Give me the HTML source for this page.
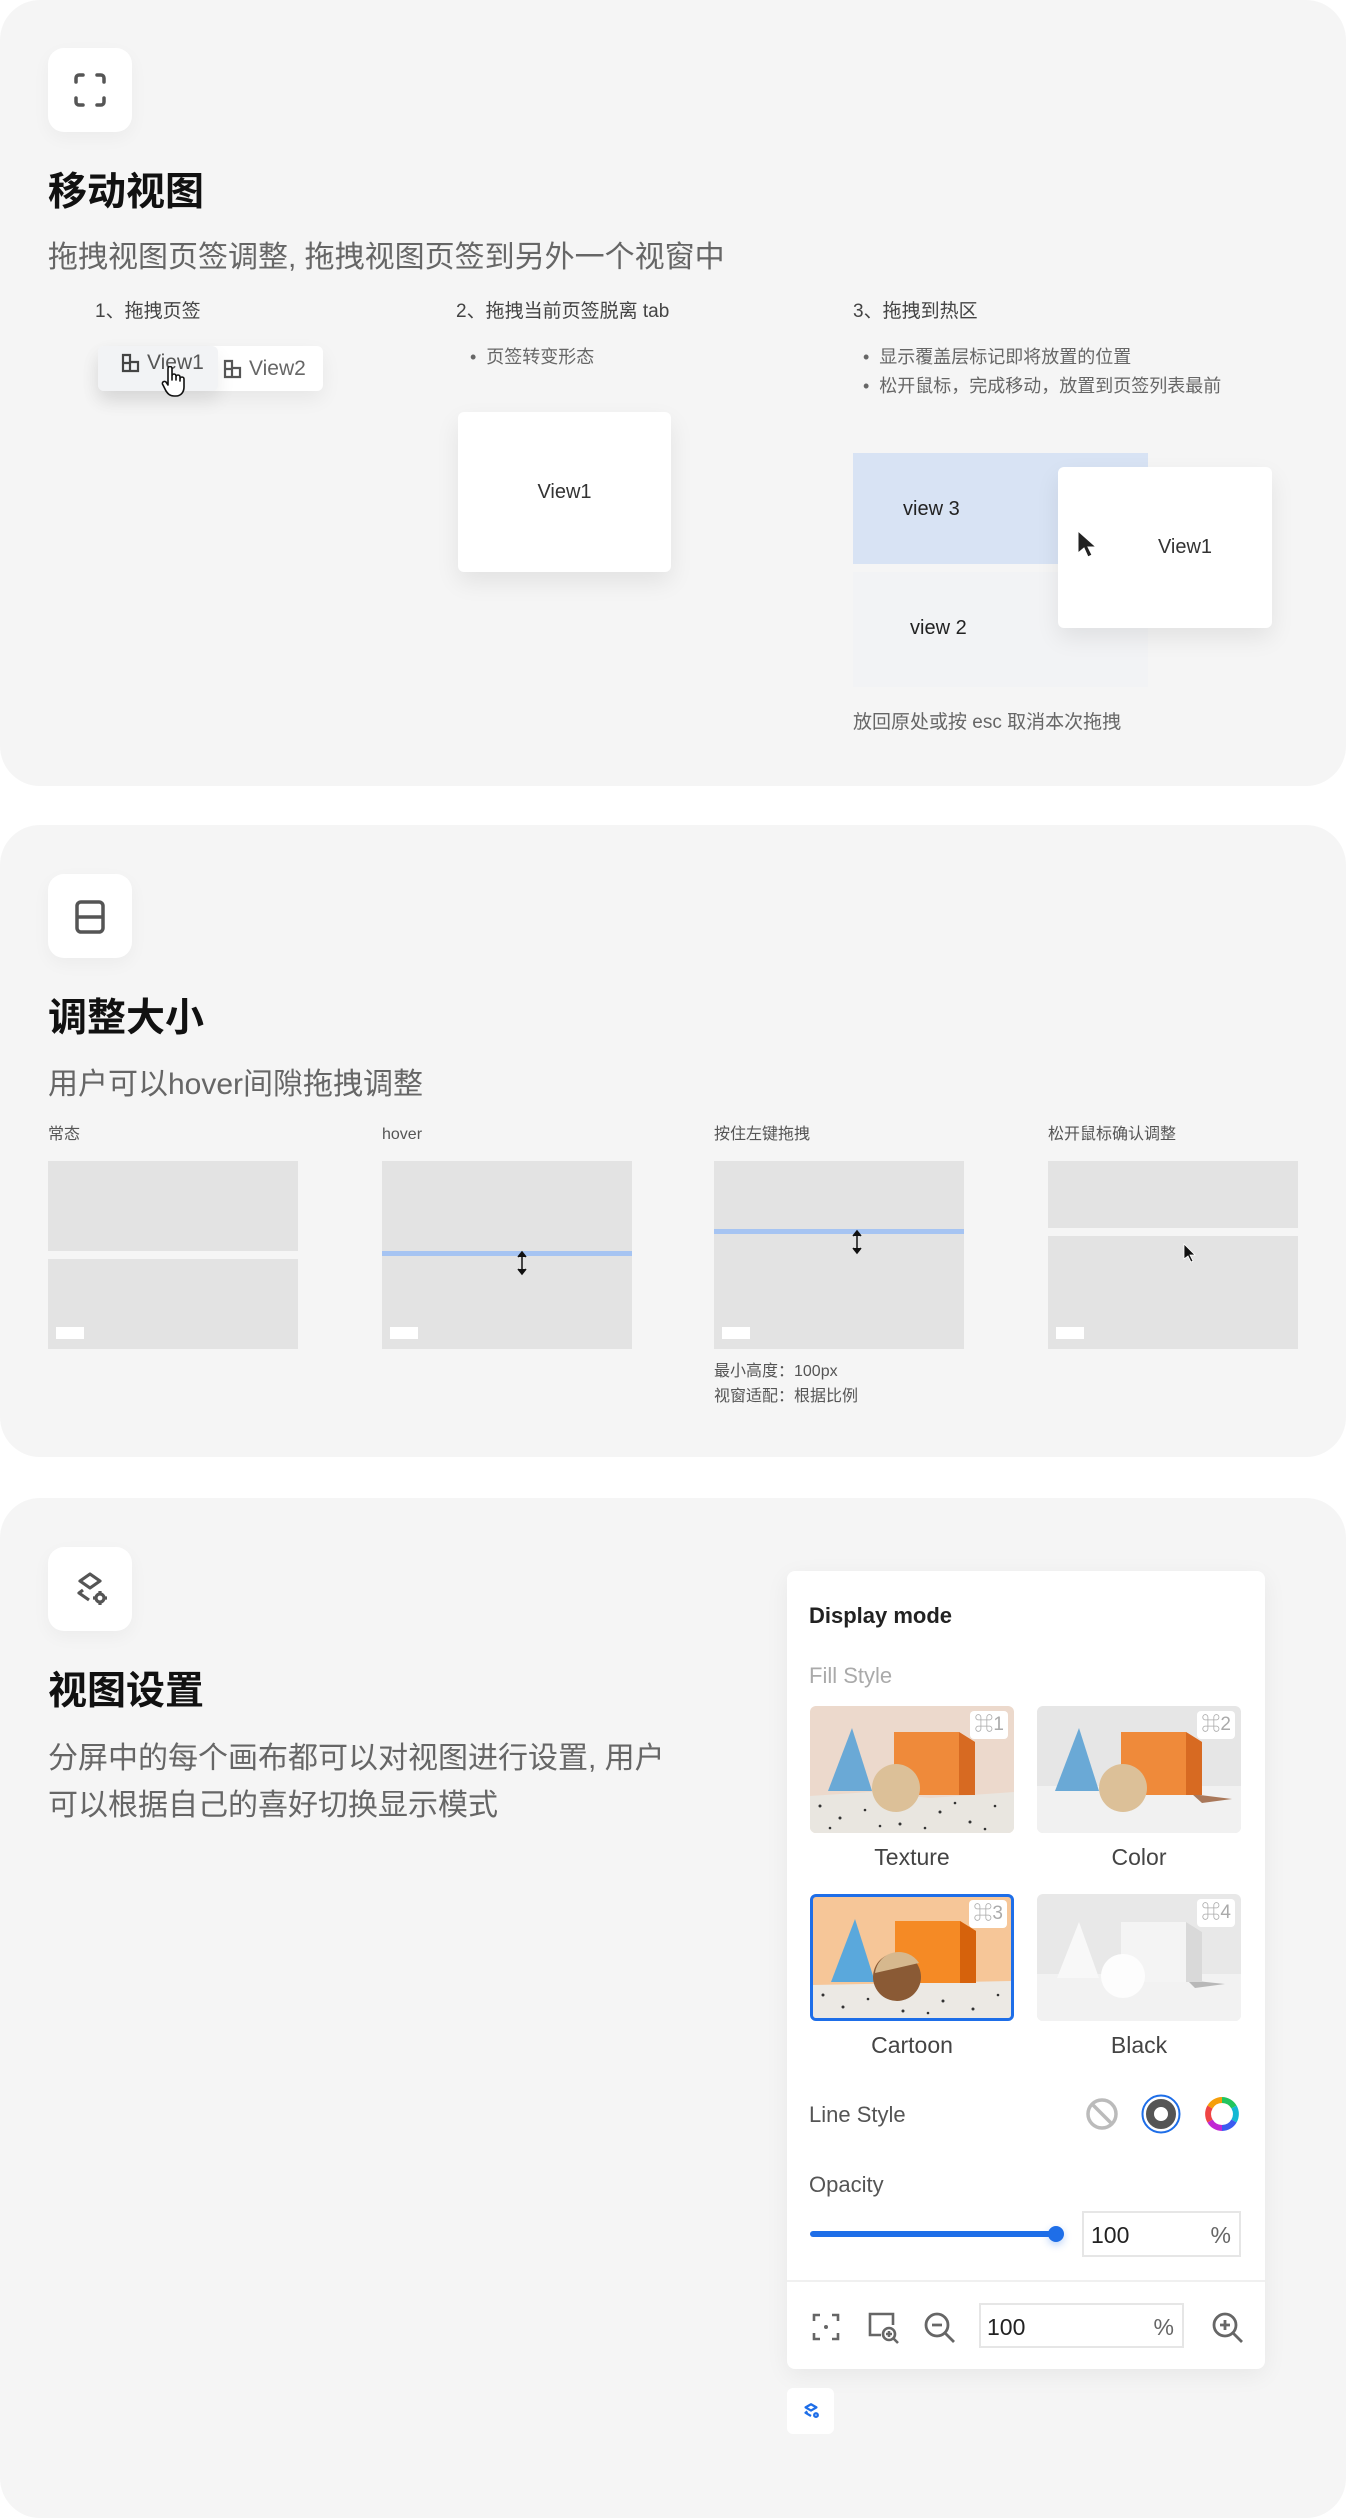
<!DOCTYPE html>
<html><head><meta charset="utf-8"><style>
*{margin:0;padding:0;box-sizing:border-box}
body{width:1346px;height:2482px;background:#fff;position:relative;overflow:hidden;font-family:"Liberation Sans","Noto Sans CJK SC",sans-serif;color:#333}
.a{position:absolute}
.sec{position:absolute;left:0;width:1346px;background:#f5f5f5;border-radius:40px}
.ib{position:absolute;left:48px;width:84px;height:84px;background:#fff;border-radius:16px;box-shadow:0 6px 18px rgba(0,0,0,.04)}
.t{position:absolute;left:48px;font-size:39px;font-weight:bold;color:#111;line-height:1}
.st{position:absolute;left:48px;font-size:30px;color:#666;line-height:47px}
.lb{position:absolute;font-size:19px;color:#444;line-height:1;white-space:nowrap}
.sl{position:absolute;font-size:16px;color:#555;line-height:1;white-space:nowrap}
.pan{position:absolute;background:#e3e3e3}
.wr{position:absolute;width:28px;height:12px;background:#fff}
.card{position:absolute;background:#fff;border-radius:6px;box-shadow:0 10px 24px rgba(0,0,0,.08);display:flex;align-items:center;justify-content:center;font-size:20px;color:#333}
.thumb{position:absolute;width:204px;height:127px;border-radius:6px;overflow:hidden}
.kb{position:absolute;right:6px;top:5px;background:#fff;border-radius:4px;color:#aaa;font-size:19px;padding:1px 4px;line-height:26px}
.cap{position:absolute;width:204px;text-align:center;font-size:23px;color:#444;line-height:1}
.inp{position:absolute;border:2px solid #e6e6e6;background:#fff;font-size:23px;color:#222}
</style></head><body>

<!-- Section 1 -->
<div class="sec" style="top:0;height:786px"></div>
<div class="ib" style="top:48px"><svg width="84" height="84" viewBox="0 0 84 84" fill="none" stroke="#555" stroke-width="3.5" stroke-linecap="round"><path d="M28 34v-4a3 3 0 0 1 3-3h4M49 27h4a3 3 0 0 1 3 3v4M56 50v4a3 3 0 0 1-3 3h-4M35 57h-4a3 3 0 0 1-3-3v-4"/></svg></div>
<div class="t" style="top:173px">移动视图</div>
<div class="st" style="top:234px">拖拽视图页签调整, 拖拽视图页签到另外一个视窗中</div>
<div class="lb" style="left:95px;top:302px">1、拖拽页签</div>
<div class="lb" style="left:456px;top:302px">2、拖拽当前页签脱离 tab</div>
<div class="lb" style="left:853px;top:302px">3、拖拽到热区</div>

<div class="a" style="left:98px;top:346px;width:225px;height:45px;background:#fff;border-radius:6px;box-shadow:0 8px 20px rgba(0,0,0,.06)"></div>
<div class="a" style="left:98px;top:346px;width:120px;height:45px;background:#f2f3f5;border-radius:6px;box-shadow:0 10px 18px rgba(0,0,0,.08)"></div>
<svg class="a" style="left:120px;top:352px" width="22" height="22" viewBox="0 0 22 22" fill="none" stroke="#444" stroke-width="2.2"><path d="M3 3h7v7h8v9H3zM3 11h7M10 11v8"/></svg>
<div class="a" style="left:147px;top:351px;font-size:21px;color:#555">View1</div>
<svg class="a" style="left:222px;top:358px" width="22" height="22" viewBox="0 0 22 22" fill="none" stroke="#555" stroke-width="2.2"><path d="M3 3h7v7h8v9H3zM3 11h7M10 11v8"/></svg>
<div class="a" style="left:249px;top:357px;font-size:21px;color:#666">View2</div>
<svg class="a" style="left:161px;top:366px" width="26" height="32" viewBox="0 0 26 32"><path d="M7 2.5a2 2 0 0 1 4 0V14l0-4a2 2 0 0 1 4 0v4-3a2 2 0 0 1 4 0v4-2a2 2 0 0 1 4 0v8c0 5-3 9-8 9h-2c-4 0-6-2-8-5L2 19a2 2 0 0 1 3-3l2 3z" fill="#fff" stroke="#111" stroke-width="1.6" stroke-linejoin="round"/></svg>

<div class="sl" style="left:470px;top:348px;font-size:18px;color:#666">•&nbsp; 页签转变形态</div>
<div class="card" style="left:458px;top:412px;width:213px;height:160px">View1</div>

<div class="sl" style="left:863px;top:348px;font-size:18px;color:#666">•&nbsp; 显示覆盖层标记即将放置的位置</div>
<div class="sl" style="left:863px;top:377px;font-size:18px;color:#666">•&nbsp; 松开鼠标，完成移动，放置到页签列表最前</div>
<div class="a" style="left:853px;top:453px;width:295px;height:111px;background:#d8e3f4"></div>
<div class="a" style="left:853px;top:572px;width:295px;height:115px;background:#f2f3f5"></div>
<div class="a" style="left:903px;top:498px;font-size:20px;color:#222">view 3</div>
<div class="a" style="left:910px;top:617px;font-size:20px;color:#222">view 2</div>
<div class="card" style="left:1058px;top:467px;width:214px;height:161px;padding-left:40px">View1</div>
<svg class="a" style="left:1076px;top:529px" width="24" height="30" viewBox="0 0 24 30"><path d="M2 2v22l6-5 4 9 4-2-4-8h8z" fill="#222" stroke="#fff" stroke-width="1"/></svg>
<div class="sl" style="left:853px;top:713px;font-size:19px;color:#666">放回原处或按 esc 取消本次拖拽</div>

<!-- Section 2 -->
<div class="sec" style="top:825px;height:632px"></div>
<div class="ib" style="top:874px"><svg width="84" height="84" viewBox="0 0 84 84" fill="none" stroke="#555" stroke-width="3.5"><rect x="29" y="28" width="26" height="30" rx="4"/><path d="M29 43h26"/></svg></div>
<div class="t" style="top:999px">调整大小</div>
<div class="st" style="top:1061px">用户可以hover间隙拖拽调整</div>
<div class="sl" style="left:48px;top:1127px">常态</div>
<div class="sl" style="left:382px;top:1127px">hover</div>
<div class="sl" style="left:714px;top:1127px">按住左键拖拽</div>
<div class="sl" style="left:1048px;top:1127px">松开鼠标确认调整</div>

<div class="pan" style="left:48px;top:1161px;width:250px;height:90px"></div>
<div class="pan" style="left:48px;top:1259px;width:250px;height:90px"></div>
<div class="wr" style="left:56px;top:1327px"></div>

<div class="pan" style="left:382px;top:1161px;width:250px;height:188px"></div>
<div class="a" style="left:382px;top:1251px;width:250px;height:5px;background:#a6c4f2"></div>
<div class="wr" style="left:390px;top:1327px"></div>
<svg class="a" style="left:515px;top:1250px" width="14" height="26" viewBox="0 0 14 26"><path d="M7 2v22M3 7l4-5 4 5M3 19l4 5 4-5" fill="#111" stroke="#111" stroke-width="1.5"/></svg>

<div class="pan" style="left:714px;top:1161px;width:250px;height:188px"></div>
<div class="a" style="left:714px;top:1229px;width:250px;height:5px;background:#a6c4f2"></div>
<div class="wr" style="left:722px;top:1327px"></div>
<svg class="a" style="left:850px;top:1229px" width="14" height="26" viewBox="0 0 14 26"><path d="M7 2v22M3 7l4-5 4 5M3 19l4 5 4-5" fill="#111" stroke="#111" stroke-width="1.5"/></svg>

<div class="pan" style="left:1048px;top:1161px;width:250px;height:67px"></div>
<div class="pan" style="left:1048px;top:1236px;width:250px;height:113px"></div>
<div class="wr" style="left:1056px;top:1327px"></div>
<svg class="a" style="left:1182px;top:1242px" width="16" height="22" viewBox="0 0 16 22"><path d="M2 2v15l4-3 3 6 2-1-3-6h5z" fill="#111" stroke="#fff" stroke-width=".8"/></svg>

<div class="sl" style="left:714px;top:1364px">最小高度：100px</div>
<div class="sl" style="left:714px;top:1389px">视窗适配：根据比例</div>

<!-- Section 3 -->
<div class="sec" style="top:1498px;height:1020px"></div>
<div class="ib" style="top:1547px"><svg width="84" height="84" viewBox="0 0 84 84" fill="none" stroke="#555" stroke-width="3.2" stroke-linejoin="round"><path d="M42 27l10 7-10 7-10-7z"/><path d="M35 43l-4 3 10 7"/><circle cx="52" cy="51" r="4"/><path d="M52 44v2M52 56v2M45 51h2M57 51h2"/></svg></div>
<div class="t" style="top:1672px">视图设置</div>
<div class="st" style="top:1735px">分屏中的每个画布都可以对视图进行设置, 用户<br>可以根据自己的喜好切换显示模式</div>

<div class="a" style="left:787px;top:1571px;width:478px;height:798px;background:#fff;border-radius:8px;box-shadow:0 6px 24px rgba(0,0,0,.06)"></div>
<div class="a" style="left:809px;top:1603px;font-size:22px;font-weight:bold;color:#222">Display mode</div>
<div class="a" style="left:809px;top:1663px;font-size:22px;color:#aaa">Fill Style</div>

<div class="thumb" style="left:810px;top:1706px;background:#ecd9cc">
<svg width="204" height="127" viewBox="0 0 204 127"><path d="M0 90l60-4 60 6 84-6v41H0z" fill="#e9e6e0"/><g fill="#333"><circle cx="10" cy="100" r="1.5"/><circle cx="30" cy="112" r="1.5"/><circle cx="55" cy="104" r="1.3"/><circle cx="90" cy="118" r="1.5"/><circle cx="130" cy="106" r="1.5"/><circle cx="160" cy="116" r="1.5"/><circle cx="185" cy="100" r="1.3"/><circle cx="20" cy="122" r="1.3"/><circle cx="115" cy="122" r="1.3"/><circle cx="175" cy="123" r="1.3"/><circle cx="70" cy="120" r="1.3"/><circle cx="145" cy="97" r="1.3"/></g><path d="M42 22L18 85h44z" fill="#6aa9d6"/><path d="M84 26h65l16 10v53H84z" fill="#ef8a3a"/><path d="M149 26l16 10v53h-16z" fill="#d76a22"/><circle cx="86" cy="82" r="24" fill="#dcc098"/></svg>
<div class="kb">⌘1</div></div>
<div class="cap" style="left:810px;top:1846px">Texture</div>

<div class="thumb" style="left:1037px;top:1706px;background:#e6e6e6">
<svg width="204" height="127" viewBox="0 0 204 127"><rect y="80" width="204" height="47" fill="#f1f1f1"/><path d="M155 88l40 5-30 4z" fill="#a9785a"/><path d="M42 22L18 85h44z" fill="#6aa9d6"/><path d="M84 26h65l16 10v53H84z" fill="#ef8a3a"/><path d="M149 26l16 10v53h-16z" fill="#d76a22"/><circle cx="86" cy="82" r="24" fill="#dcc098"/></svg>
<div class="kb">⌘2</div></div>
<div class="cap" style="left:1037px;top:1846px">Color</div>

<div class="thumb" style="left:810px;top:1894px;background:#f6c698;border:3px solid #1e6ee8">
<svg width="198" height="121" viewBox="0 0 198 121"><path d="M0 88l200-4v40H0z" fill="#ece9e4"/><g fill="#333"><circle cx="10" cy="98" r="1.5"/><circle cx="30" cy="110" r="1.5"/><circle cx="55" cy="102" r="1.3"/><circle cx="90" cy="114" r="1.5"/><circle cx="130" cy="104" r="1.5"/><circle cx="160" cy="112" r="1.5"/><circle cx="185" cy="98" r="1.3"/><circle cx="115" cy="116" r="1.3"/></g><path d="M42 22L18 85h44z" fill="#5aa8dc"/><path d="M82 24h65l16 10v52H82z" fill="#f58a25"/><path d="M147 24l16 10v52h-16z" fill="#d6620c"/><circle cx="84" cy="80" r="24" fill="#8a5a35"/><path d="M62 76a24 24 0 0 1 44-10z" fill="#d6b88e"/></svg>
<div class="kb" style="top:3px;right:4px">⌘3</div></div>
<div class="cap" style="left:810px;top:2034px">Cartoon</div>

<div class="thumb" style="left:1037px;top:1894px;background:#e8e8e8">
<svg width="204" height="127" viewBox="0 0 204 127"><rect y="80" width="204" height="47" fill="#f2f2f2"/><path d="M150 86l38 4-30 4z" fill="#b8b8b8"/><path d="M42 28L20 84h42z" fill="#f8f8f8"/><path d="M84 28h65l16 10v50H84z" fill="#f4f4f4"/><path d="M149 28l16 10v50h-16z" fill="#d9d9d9"/><circle cx="86" cy="82" r="22" fill="#fdfdfd"/></svg>
<div class="kb">⌘4</div></div>
<div class="cap" style="left:1037px;top:2034px">Black</div>

<div class="a" style="left:809px;top:2102px;font-size:22px;color:#555">Line Style</div>
<svg class="a" style="left:1084px;top:2096px" width="36" height="36" viewBox="0 0 36 36" fill="none" stroke="#bbb" stroke-width="3.5"><circle cx="18" cy="18" r="14"/><path d="M8 8l20 20"/></svg>
<svg class="a" style="left:1141px;top:2094px" width="40" height="40" viewBox="0 0 40 40"><circle cx="20" cy="20" r="18.5" fill="none" stroke="#1e6ee8" stroke-width="2"/><circle cx="20" cy="20" r="11" fill="none" stroke="#555" stroke-width="8"/></svg>
<svg class="a" style="left:1204px;top:2096px" width="36" height="36" viewBox="0 0 36 36" fill="none" stroke-width="6"><path d="M18 4a14 14 0 0 1 12 7" stroke="#22c55e"/><path d="M30 11a14 14 0 0 1 0 14" stroke="#14b8d4"/><path d="M30 25a14 14 0 0 1-12 7" stroke="#3b5bf0"/><path d="M18 32a14 14 0 0 1-12-7" stroke="#c026d3"/><path d="M6 25a14 14 0 0 1 0-14" stroke="#ef4444"/><path d="M6 11a14 14 0 0 1 12-7" stroke="#f59e0b"/></svg>

<div class="a" style="left:809px;top:2172px;font-size:22px;color:#555">Opacity</div>
<div class="a" style="left:810px;top:2231px;width:246px;height:6px;border-radius:3px;background:#1e6ee8"></div>
<div class="a" style="left:1048px;top:2226px;width:16px;height:16px;border-radius:50%;background:#1e6ee8;box-shadow:0 3px 8px rgba(30,110,232,.3)"></div>
<div class="inp" style="left:1082px;top:2211px;width:159px;height:46px"><span class="a" style="left:7px;top:9px">100</span><span class="a" style="right:8px;top:9px;color:#666">%</span></div>

<div class="a" style="left:787px;top:2280px;width:478px;height:2px;background:#f0f0f0"></div>
<svg class="a" style="left:811px;top:2312px" width="30" height="30" viewBox="0 0 30 30" fill="none" stroke="#666" stroke-width="2.6"><path d="M3 9V3h6M21 3h6v6M27 21v6h-6M9 27H3v-6"/><circle cx="15" cy="15" r="2" fill="#666" stroke="none"/></svg>
<svg class="a" style="left:866px;top:2310px" width="34" height="34" viewBox="0 0 34 34" fill="none" stroke="#666" stroke-width="2.6"><path d="M15 25H4V4h23v11"/><circle cx="23" cy="24" r="6"/><path d="M27.5 28.5L32 33M23 21v6M20 24h6"/></svg>
<svg class="a" style="left:922px;top:2310px" width="34" height="34" viewBox="0 0 34 34" fill="none" stroke="#666" stroke-width="2.8"><circle cx="15" cy="15" r="11"/><path d="M23 23l9 9M10 15h10"/></svg>
<div class="inp" style="left:979px;top:2303px;width:205px;height:45px"><span class="a" style="left:6px;top:9px">100</span><span class="a" style="right:8px;top:9px;color:#666">%</span></div>
<svg class="a" style="left:1210px;top:2310px" width="34" height="34" viewBox="0 0 34 34" fill="none" stroke="#666" stroke-width="2.8"><circle cx="15" cy="15" r="11"/><path d="M23 23l9 9M10 15h10M15 10v10"/></svg>

<div class="a" style="left:787px;top:2388px;width:47px;height:46px;background:#fff;border-radius:6px"></div>
<svg class="a" style="left:792px;top:2392px" width="38" height="38" viewBox="0 0 84 84" fill="none" stroke="#1e6ee8" stroke-width="5" stroke-linejoin="round"><path d="M42 27l12 7-12 7-12-7z"/><path d="M34 43l-4 3 12 7"/><circle cx="53" cy="51" r="4"/></svg>
</body></html>
